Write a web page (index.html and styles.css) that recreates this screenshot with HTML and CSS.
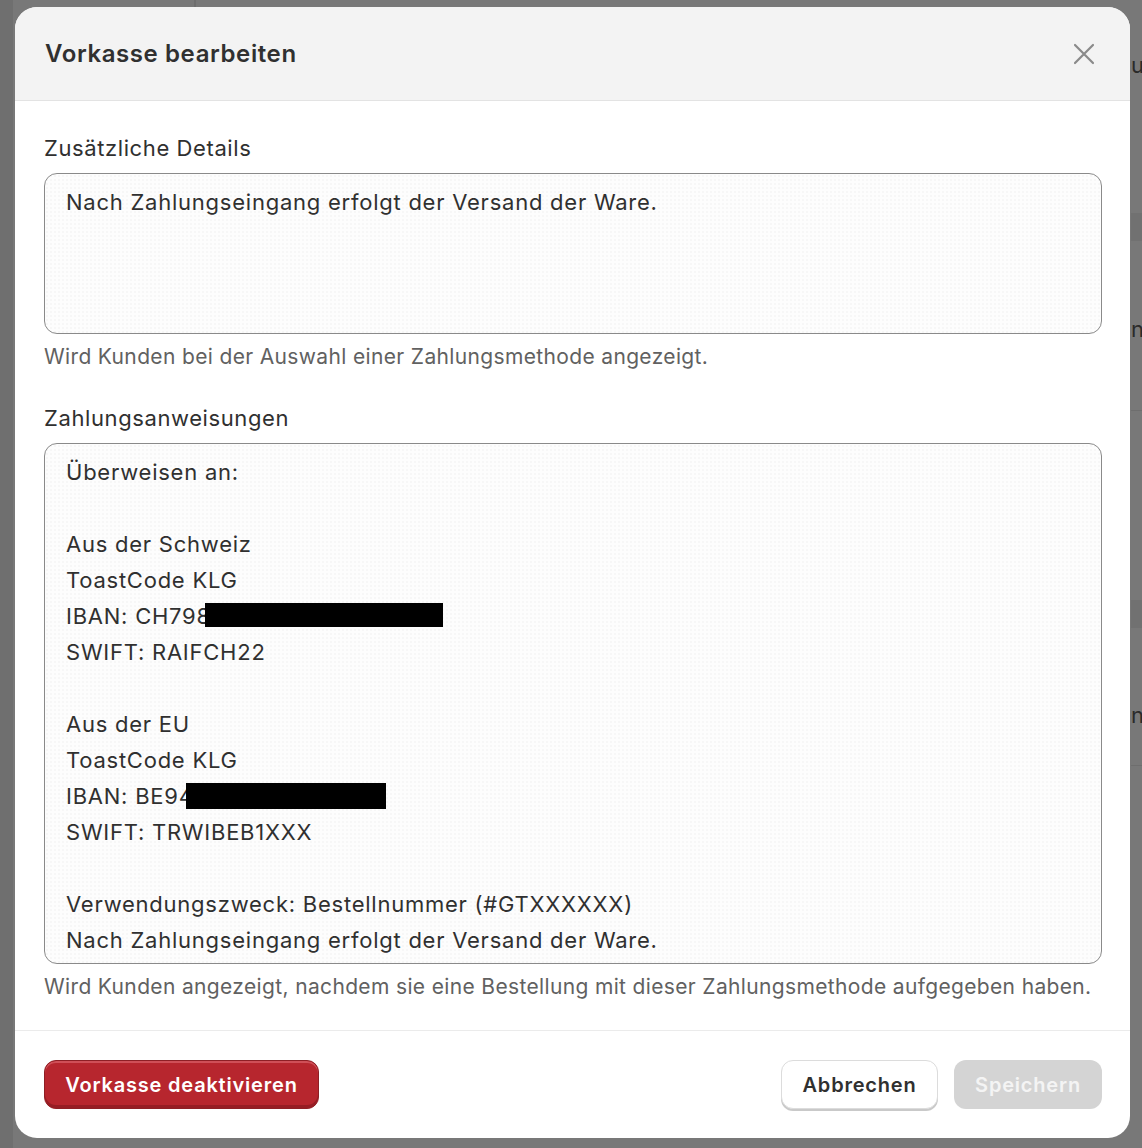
FILE: index.html
```html
<!DOCTYPE html>
<html lang="de">
<head>
<meta charset="utf-8">
<title>Vorkasse bearbeiten</title>
<link rel="stylesheet" href="styles.css">
</head>
<body>
<div class="backdrop">
  <div class="bg-line bg-line-v"></div>
  <div class="bg-line bg-h1"></div>
  <div class="bg-line bg-h2"></div>
  <div class="bg-line bg-h3"></div>
  <div class="bg-line bg-h4"></div>
  <div class="bg-text bg-t1">us</div>
  <div class="bg-text bg-t2">n</div>
  <div class="bg-text bg-t3">n</div>
</div>
<div class="modal">
  <div class="modal-header">
    <h1 class="modal-title">Vorkasse bearbeiten</h1>
    <button class="close-btn" aria-label="Schließen">
      <svg width="22" height="22" viewBox="0 0 22 22"><path d="M2 2 L20 20 M20 2 L2 20" stroke="#8a8a8a" stroke-width="2.2" stroke-linecap="round" fill="none"/></svg>
    </button>
  </div>
  <div class="modal-body">
    <div class="field">
      <label class="field-label">Zusätzliche Details</label>
      <div class="textarea ta-small">
        <div class="ta-line">Nach Zahlungseingang erfolgt der Versand der Ware.</div>
      </div>
      <div class="help">Wird Kunden bei der Auswahl einer Zahlungsmethode angezeigt.</div>
    </div>
    <div class="field">
      <label class="field-label">Zahlungsanweisungen</label>
      <div class="textarea ta-large">
        <div class="ta-line">Überweisen an:</div>
        <div class="ta-line">&nbsp;</div>
        <div class="ta-line">Aus der Schweiz</div>
        <div class="ta-line">ToastCode KLG</div>
        <div class="ta-line redacted-line">IBAN: CH798<span class="redact redact-1"></span></div>
        <div class="ta-line">SWIFT: RAIFCH22</div>
        <div class="ta-line">&nbsp;</div>
        <div class="ta-line">Aus der EU</div>
        <div class="ta-line">ToastCode KLG</div>
        <div class="ta-line redacted-line">IBAN: BE94<span class="redact redact-2"></span></div>
        <div class="ta-line">SWIFT: TRWIBEB1XXX</div>
        <div class="ta-line">&nbsp;</div>
        <div class="ta-line">Verwendungszweck: Bestellnummer (#GTXXXXXX)</div>
        <div class="ta-line">Nach Zahlungseingang erfolgt der Versand der Ware.</div>
      </div>
      <div class="help">Wird Kunden angezeigt, nachdem sie eine Bestellung mit dieser Zahlungsmethode aufgegeben haben.</div>
    </div>
  </div>
  <div class="modal-footer">
    <button class="btn btn-danger">Vorkasse deaktivieren</button>
    <div class="footer-right">
      <button class="btn btn-secondary">Abbrechen</button>
      <button class="btn btn-disabled">Speichern</button>
    </div>
  </div>
</div>
</body>
</html>
```

FILE: styles.css
```css
* { box-sizing: border-box; }
html, body {
  margin: 0;
  padding: 0;
}
body {
  width: 1142px;
  height: 1148px;
  background: #787878;
  font-family: Inter, "Noto Sans", "Liberation Sans", sans-serif;
  color: #303030;
  padding: 7px 12px 0 15px;
  overflow: hidden;
  position: relative;
}
.backdrop {
  position: absolute;
  inset: 0;
  z-index: 0;
  background: linear-gradient(to right, #6f6f6f 0, #6f6f6f 13px, #787878 13px);
}
.bg-line { position: absolute; background: #6e6e6e; }
.bg-line-v { left: 194px; top: 0; width: 2px; height: 7px; }
.bg-h1 { left: 1131px; top: 213px; width: 11px; height: 28px; background: #717171; }
.bg-h2 { left: 1131px; top: 410px; width: 11px; height: 1px; }
.bg-h3 { left: 1131px; top: 600px; width: 11px; height: 28px; background: #717171; }
.bg-h4 { left: 1131px; top: 765px; width: 11px; height: 1px; }
.bg-text {
  position: absolute;
  font-size: 22px;
  line-height: 26px;
  color: #2a2a2a;
  left: 1131px;
  width: 11px;
  overflow: hidden;
}
.bg-t1 { top: 52px; }
.bg-t2 { top: 316px; }
.bg-t3 { top: 702px; }

.modal {
  position: relative;
  z-index: 1;
  width: 1115px;
  height: 1131px;
  background: #fff;
  border-radius: 22px;
  overflow: hidden;
  display: flex;
  flex-direction: column;
}
.modal-header {
  height: 94px;
  background: #f3f3f3;
  border-bottom: 1px solid #e3e3e3;
  display: flex;
  align-items: center;
  justify-content: space-between;
  padding: 0 35px 0 30px;
}
.modal-title {
  margin: 0;
  font-size: 24px;
  font-weight: 600;
  color: #303030;
  letter-spacing: 0.6px;
}
.close-btn {
  background: none;
  border: none;
  padding: 0;
  width: 22px;
  height: 22px;
  display: flex;
  cursor: pointer;
}
.modal-body {
  flex: 1;
  padding: 30px 28px 0 29px;
  display: flex;
  flex-direction: column;
  gap: 29px;
}
.field {
  display: flex;
  flex-direction: column;
}
.field-label {
  font-size: 22px;
  line-height: 34px;
  letter-spacing: 0.6px;
  color: #303030;
  margin-bottom: 8px;
}
.textarea {
  border: 1.5px solid #8a8a8a;
  border-radius: 13px;
  background-color: #fdfdfd;
  background-image: radial-gradient(#efefef 0.6px, transparent 0.8px);
  background-size: 4px 4px;
  padding: 10px 20px 0 21px;
  font-size: 22px;
  line-height: 36px;
  letter-spacing: 0.76px;
  color: #303030;
  overflow: hidden;
}
.ta-small { height: 161px; }
.ta-large { height: 521px; }
.ta-line { white-space: pre; }
.redacted-line { position: relative; }
.redact {
  position: absolute;
  background: #000;
}
.redact-1 { left: 139px; top: 5px; width: 238px; height: 24px; }
.redact-2 { left: 120px; top: 5px; width: 200px; height: 26px; }
.help {
  margin-top: 8px;
  font-size: 21px;
  line-height: 30px;
  letter-spacing: 0.35px;
  color: #616161;
}
.modal-footer {
  height: 108px;
  border-top: 1px solid #ebebeb;
  display: flex;
  align-items: center;
  justify-content: space-between;
  padding: 0 28px 0 29px;
}
.footer-right {
  display: flex;
  gap: 16px;
}
.btn {
  font-family: inherit;
  font-size: 20px;
  font-weight: 600;
  letter-spacing: 0.8px;
  height: 49px;
  border-radius: 12px;
  padding: 0;
  cursor: pointer;
}
.btn-danger {
  width: 275px;
  background: #b7262e;
  color: #fff;
  border: 1px solid #8e1f25;
  box-shadow: inset 0 2px 0 #cf4f57, inset 0 -3px 0 #961d24;
}
.btn-secondary {
  width: 157px;
  background: #fff;
  color: #303030;
  border: 1px solid #dcdcdc;
  box-shadow: 0 2px 0 #c9c9c9;
}
.btn-disabled {
  width: 148px;
  background: #d4d4d4;
  color: #f4f4f4;
  border: none;
}
```
